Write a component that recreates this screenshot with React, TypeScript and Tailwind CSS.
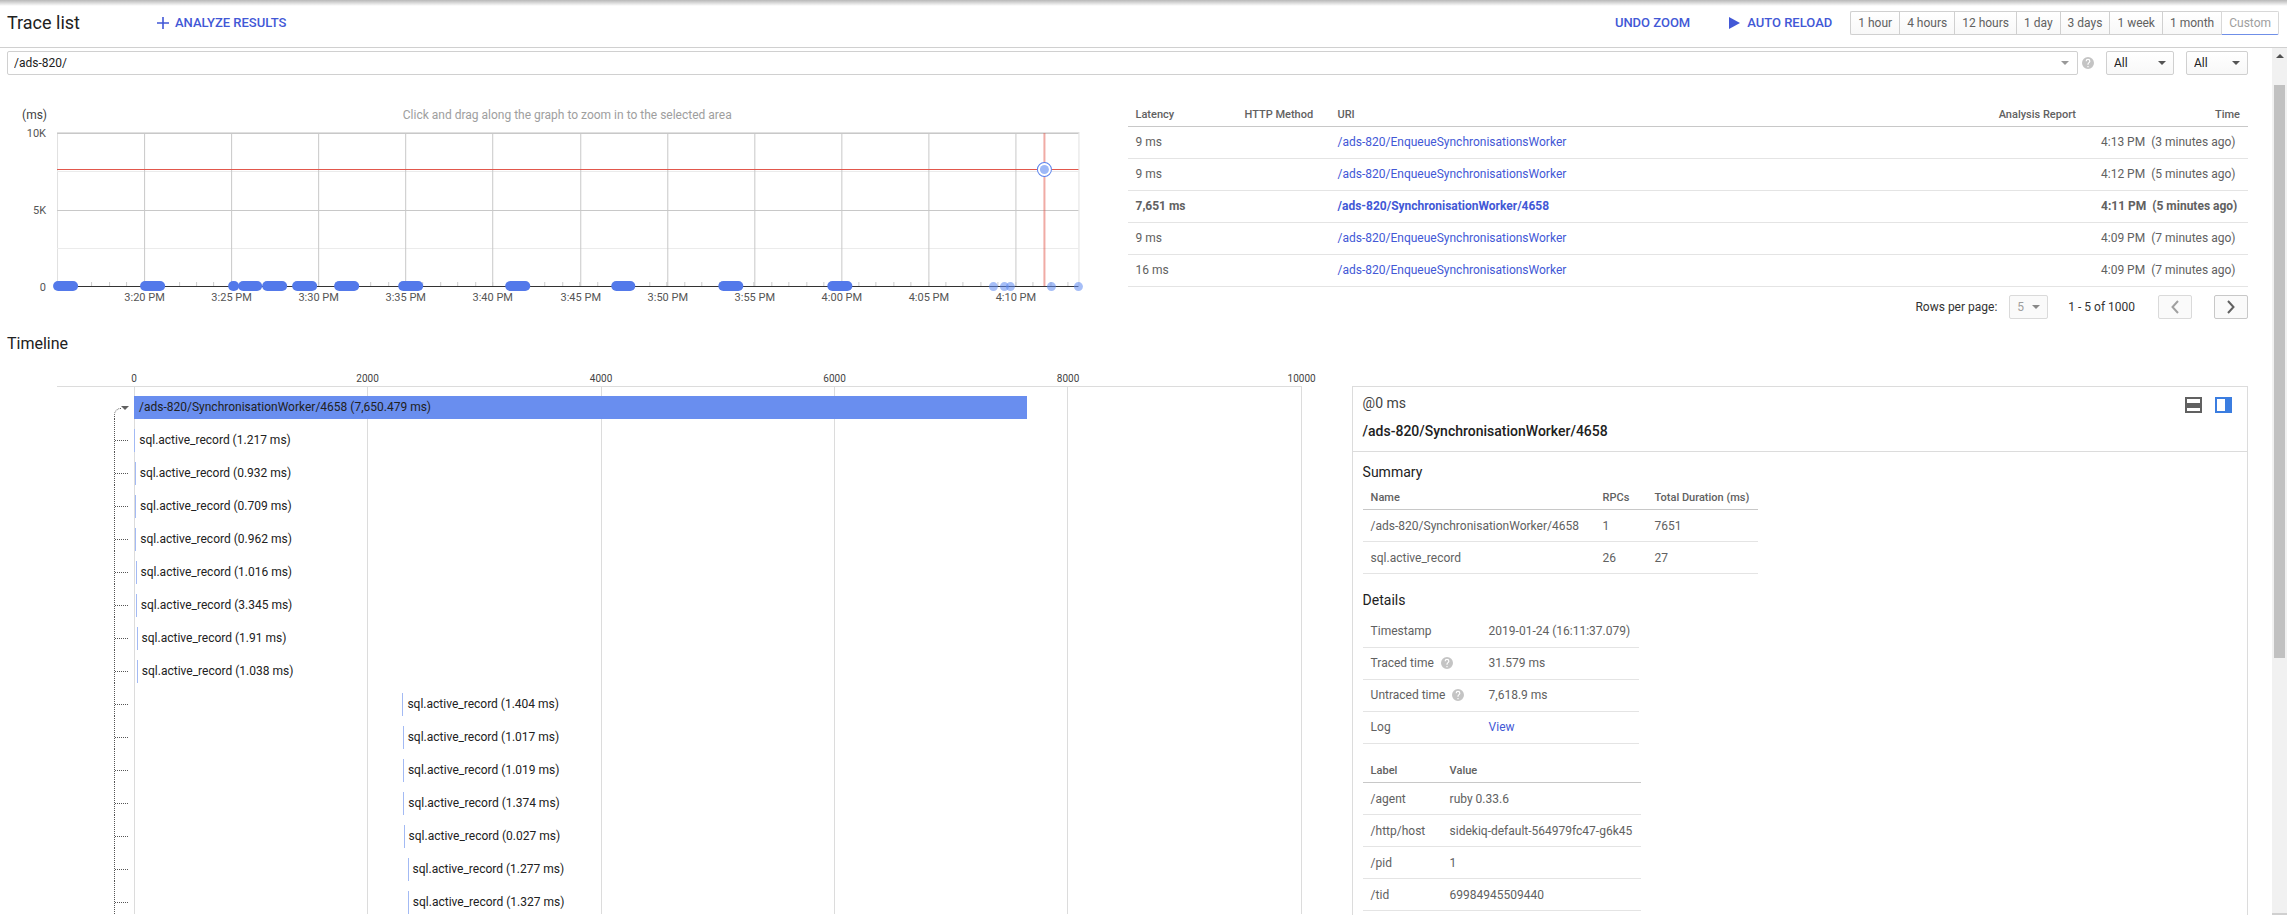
import type { ReactNode } from 'react';

const ranges = ['1 hour', '4 hours', '12 hours', '1 day', '3 days', '1 week', '1 month'];

const traces = [
  { latency: '9 ms', uri: '/ads-820/EnqueueSynchronisationsWorker', time: '4:13 PM', ago: '(3 minutes ago)' },
  { latency: '9 ms', uri: '/ads-820/EnqueueSynchronisationsWorker', time: '4:12 PM', ago: '(5 minutes ago)' },
  { latency: '7,651 ms', uri: '/ads-820/SynchronisationWorker/4658', time: '4:11 PM', ago: '(5 minutes ago)', selected: true },
  { latency: '9 ms', uri: '/ads-820/EnqueueSynchronisationsWorker', time: '4:09 PM', ago: '(7 minutes ago)' },
  { latency: '16 ms', uri: '/ads-820/EnqueueSynchronisationsWorker', time: '4:09 PM', ago: '(7 minutes ago)' },
];

// start is in ms from the beginning of the trace
const spans = [
  { start: 2, duration: '1.217' },
  { start: 6, duration: '0.932' },
  { start: 9, duration: '0.709' },
  { start: 11, duration: '0.962' },
  { start: 13, duration: '1.016' },
  { start: 15, duration: '3.345' },
  { start: 22, duration: '1.91' },
  { start: 24, duration: '1.038' },
  { start: 2299, duration: '1.404' },
  { start: 2301, duration: '1.017' },
  { start: 2303, duration: '1.019' },
  { start: 2306, duration: '1.374' },
  { start: 2309, duration: '0.027' },
  { start: 2343, duration: '1.277' },
  { start: 2345, duration: '1.327' },
];

const TIMELINE_MAX = 10000;

const xTicks = ['3:20 PM', '3:25 PM', '3:30 PM', '3:35 PM', '3:40 PM', '3:45 PM', '3:50 PM', '3:55 PM', '4:00 PM', '4:05 PM', '4:10 PM'];
const bursts = [[46, 71], [133, 158], [221, 232], [231, 255], [255, 280], [285, 310], [327, 352], [391, 416], [498, 523], [604, 628], [711, 736], [820, 845]];
const singles = [986, 997, 1003, 1044, 1071];

const labels = [
  ['/agent', 'ruby 0.33.6'],
  ['/http/host', 'sidekiq-default-564979fc47-g6k45'],
  ['/pid', '1'],
  ['/tid', '69984945509440'],
];

function HelpIcon({ className }: { className: string }) {
  return (
    <svg viewBox="0 0 24 24" className={className} fill="#c4c4c4" aria-hidden="true">
      <path d="M12 0a12 12 0 1 0 0 24 12 12 0 0 0 0-24zm1.2 20.4h-2.4V18h2.4v2.4zm2.5-9.3-1.1 1.1c-.9.9-1.4 1.6-1.4 3.4h-2.4V15c0-1.3.5-2.5 1.4-3.4l1.5-1.5c.4-.4.7-1 .7-1.7a2.4 2.4 0 0 0-4.8 0H7.2a4.8 4.8 0 0 1 9.6 0c0 1.1-.4 2-1.1 2.7z" />
    </svg>
  );
}

function Caret({ className }: { className: string }) {
  return (
    <svg viewBox="0 0 8 4" className={`pointer-events-none absolute h-1 w-2 ${className}`} fill="currentColor" aria-hidden="true">
      <path d="M0 0h8L4 4z" />
    </svg>
  );
}

function Header() {
  return (
    <header className="flex h-12 shrink-0 items-center border-b border-[#d0d0d0] bg-linear-to-b from-[#b8b8b8] via-white via-[6px] to-white pr-2 pb-[2px] pl-[7px]">
      <h1 className="w-[150px] text-[18px] leading-6 text-[#212121]">Trace list</h1>
      <button className="flex items-center gap-[6px] text-[13px] font-medium text-[#4258d6]">
        <svg viewBox="0 0 12 12" className="h-3 w-3" stroke="currentColor" strokeWidth="1.6" aria-hidden="true">
          <path d="M6 0v12M0 6h12" />
        </svg>
        ANALYZE RESULTS
      </button>
      <button className="ml-auto text-[13px] font-medium text-[#4258d6]">UNDO ZOOM</button>
      <button className="ml-[39px] flex items-center gap-[7px] text-[13px] font-medium text-[#4258d6]">
        <svg viewBox="0 0 11 12" className="h-3 w-[11px]" fill="currentColor" aria-hidden="true">
          <path d="M0 0l11 6-11 6z" />
        </svg>
        AUTO RELOAD
      </button>
      <div className="ml-[18px] flex h-6 text-[12px] text-[#616161]">
        {ranges.map((range) => (
          <button key={range} className="border border-r-0 border-[#d0d0d0] bg-linear-to-b from-white to-[#f8f8f8] px-[7px] first:rounded-l-xs">
            {range}
          </button>
        ))}
        <button disabled className="rounded-r-xs border border-[#d8d8d8] border-b-[#6f8fe8] px-[7px] text-[#a0a0a0]">
          Custom
        </button>
      </div>
    </header>
  );
}

function Filters() {
  return (
    <div className="flex items-center">
      <div className="relative flex-1">
        <input
          aria-label="Trace filter"
          defaultValue="/ads-820/"
          className="block h-6 w-full rounded-xs border border-[#d0d0d0] px-[6px] text-[12px] text-[#212121] outline-none"
        />
        <Caret className="top-[10px] right-[9px] text-[#999]" />
      </div>
      <HelpIcon className="ml-1 h-3 w-3" />
      <div className="relative ml-3 w-[68px]">
        <select aria-label="HTTP method" className="block h-6 w-full appearance-none rounded-xs border border-[#d0d0d0] bg-linear-to-b from-white to-[#f8f8f8] px-[7px] text-[12px] text-[#212121]">
          <option>All</option>
        </select>
        <Caret className="top-[10px] right-2 text-[#555]" />
      </div>
      <div className="relative ml-3 w-[62px]">
        <select aria-label="Status" className="block h-6 w-full appearance-none rounded-xs border border-[#d0d0d0] bg-linear-to-b from-white to-[#f8f8f8] px-[7px] text-[12px] text-[#212121]">
          <option>All</option>
        </select>
        <Caret className="top-[10px] right-2 text-[#555]" />
      </div>
    </div>
  );
}

function LatencyChart() {
  const minor = Array.from({ length: 58 }, (_, i) => 67 + i * 17.42).filter((x) => x < 1069);

  return (
    <svg viewBox="0 0 1120 208" className="block w-full" role="img" aria-label="Latency over time">
      <text x="15" y="21" fontSize="12" fill="#424242">(ms)</text>
      <text x="560" y="21" fontSize="12" fill="#9e9e9e" textAnchor="middle">Click and drag along the graph to zoom in to the selected area</text>
      <path d="M50.5 34v154M1071.5 34v154M50 34.5h1022" stroke="#e0e0e0" strokeWidth="1" fill="none" />
      <path d="M50 73.5h1021M50 150.5h1021" stroke="#ebebeb" />
      <path d="M50 35.5h1021M50 112.5h1021" stroke="#c8c8c8" />
      {minor.map((x) => (
        <path key={x} d={`M${Math.round(x) + 0.5} 184v4`} stroke="#ccc" />
      ))}
      {xTicks.map((label, i) => {
        const x = Math.round(137 + i * 87.1) + 0.5;
        return (
          <g key={label}>
            <path d={`M${x} 35v153`} stroke="#c8c8c8" />
            <text x={x} y="203" fontSize="11" fill="#555" textAnchor="middle">{label}</text>
          </g>
        );
      })}
      {['10K', '5K', '0'].map((label, i) => (
        <text key={label} x="39" y={39 + i * 77} fontSize="11" fill="#555" textAnchor="end">{label}</text>
      ))}
      <path d="M50 188.5h1021" stroke="#333" />
      <path d="M50 71.5h1021" stroke="#e2574c" />
      <path d="M1037 35v153" stroke="#e2574c" strokeOpacity="0.5" strokeWidth="2" />
      {bursts.map(([from, to]) => (
        <rect key={from} x={from} y="183" width={to - from} height="10" rx="5" fill="#5379ea" />
      ))}
      {singles.map((x) => (
        <circle key={x} cx={x} cy="188.5" r="4.5" fill="#5c88f0" fillOpacity="0.55" />
      ))}
      <circle cx="1037" cy="71.5" r="7" fill="#fff" stroke="#5c82ec" />
      <circle cx="1037" cy="71.5" r="4.5" fill="#9db8f7" />
    </svg>
  );
}

function TraceTable() {
  return (
    <div>
      <table className="w-full table-fixed text-left text-[12px] text-[#616161]">
        <thead>
          <tr className="h-[26px] border-b border-[#c8c8c8] text-[11px]">
            <th className="w-[109px] pt-1 pl-2 font-medium">Latency</th>
            <th className="w-[93px] pt-1 pl-2 font-medium">HTTP Method</th>
            <th className="pt-1 pl-2 font-medium">URI</th>
            <th className="w-[93px] pt-1 text-right font-medium">Analysis Report</th>
            <th className="w-[172px] pt-1 pr-2 text-right font-medium">Time</th>
          </tr>
        </thead>
        <tbody>
          {traces.map((trace, i) => (
            <tr key={i} className={`h-8 border-b border-[#e4e4e4] ${trace.selected ? 'font-bold' : ''}`}>
              <td className="pl-2">{trace.latency}</td>
              <td></td>
              <td className="pl-2">
                <a href="#trace" className="text-[#4258d6]">{trace.uri}</a>
              </td>
              <td></td>
              <td>
                <div className="ml-auto flex w-[147px] gap-[6px] whitespace-nowrap">
                  <span>{trace.time}</span>
                  <span>{trace.ago}</span>
                </div>
              </td>
            </tr>
          ))}
        </tbody>
      </table>
      <div className="mt-2 flex items-center justify-end text-[12px] text-[#333]">
        <label htmlFor="rows">Rows per page:</label>
        <div className="relative ml-3 w-[39px]">
          <select id="rows" disabled className="block h-6 w-full appearance-none rounded-xs border border-[#dadada] bg-[#fafafa] px-[7px] text-[#9e9e9e]">
            <option>5</option>
          </select>
          <Caret className="top-[10px] right-2 text-[#888]" />
        </div>
        <span className="ml-5">1 - 5 of 1000</span>
        <button disabled aria-label="Previous page" className="ml-[23px] flex h-6 w-[34px] items-center justify-center rounded-xs border border-[#dadada] bg-[#fafafa] text-[#a0a0a0]">
          <svg viewBox="0 0 8 14" className="h-[14px] w-2" fill="none" stroke="currentColor" strokeWidth="2"><path d="M7 1L1.500 7 7 13" /></svg>
        </button>
        <button aria-label="Next page" className="ml-[22px] flex h-6 w-[34px] items-center justify-center rounded-xs border border-[#c8c8c8] bg-[#fafafa] text-[#616161]">
          <svg viewBox="0 0 8 14" className="h-[14px] w-2" fill="none" stroke="currentColor" strokeWidth="2"><path d="M1 1l5.500 6L1 13" /></svg>
        </button>
      </div>
    </div>
  );
}

function Timeline() {
  return (
    <div className="w-3/5 pr-[50px] pl-[50px]">
      <div className="ml-[77px] flex h-[14px] text-[10px] leading-[14px] text-[#444]">
        {[0, 2000, 4000, 6000, 8000].map((tick) => (
          <div key={tick} className="w-1/5">
            <span className="inline-block -translate-x-1/2">{tick}</span>
          </div>
        ))}
        <span className="w-0"><span className="inline-block -translate-x-1/2">10000</span></span>
      </div>
      <div className="relative border-t border-[#dcdcdc]">
        <div className="absolute inset-y-0 right-0 left-[77px] grid grid-cols-5 border-l border-[#dcdcdc]">
          {[1, 2, 3, 4, 5].map((col) => (
            <div key={col} className="border-r border-[#dcdcdc]"></div>
          ))}
        </div>
        <div className="relative flex pt-[9px] text-[12px] text-[#212121]">
          <div className="flex w-[77px] shrink-0 justify-end">
            <div className="relative w-[20px]">
              <div className="absolute top-3 bottom-0 left-0 w-[7px] rounded-tl-lg border-t border-l border-dotted border-[#555]"></div>
              <button aria-label="Collapse" className="absolute top-[10px] left-[7px] block h-2 w-2 text-[#616161]">
                <Caret className="top-0 left-0" />
              </button>
            </div>
          </div>
          <div className="flex-1">
            <div className="h-[23px] w-[76.5%] bg-[#698eef] pl-[5px] leading-[23px] whitespace-nowrap">/ads-820/SynchronisationWorker/4658 (7,650.479 ms)</div>
          </div>
        </div>
        {spans.map((span) => (
          <div key={span.start} className="relative flex pt-[10px] text-[12px] text-[#212121]">
            <div className="flex w-[77px] shrink-0 justify-end">
              <div className="-mt-[10px] w-[20px] border-l border-dotted border-[#555]">
                <div className="mt-[21px] w-[13px] border-t border-dotted border-[#555]"></div>
              </div>
            </div>
            <div className="flex-1">
              <div
                className="h-[23px] border-l border-[#a3baf4] pl-1 leading-[23px] whitespace-nowrap"
                style={{ marginLeft: `${(span.start / TIMELINE_MAX) * 100}%` }}
              >
                sql.active_record ({span.duration} ms)
              </div>
            </div>
          </div>
        ))}
      </div>
    </div>
  );
}

function DetailRow({ label, help, children }: { label: string; help?: boolean; children: ReactNode }) {
  return (
    <tr className="h-8 border-b border-[#e4e4e4]">
      <td className="w-[118px] pl-2">
        <span className="flex items-center gap-[7px]">
          {label}
          {help && <HelpIcon className="h-3 w-3" />}
        </span>
      </td>
      <td className="pl-2">{children}</td>
    </tr>
  );
}

function DetailsPanel() {
  return (
    <section className="mt-[14px] w-2/5 border border-[#dcdcdc]">
      <div className="flex h-[65px] justify-between border-b border-[#dcdcdc] pr-[15px] pl-[10px]">
        <div className="pt-[2px] text-[14px] leading-7 text-[#212121]">
          <p className="text-[#424242]">@0 ms</p>
          <h3 className="font-medium">/ads-820/SynchronisationWorker/4658</h3>
        </div>
        <div className="flex gap-[13px] pt-[10px]">
          <button aria-label="Dock to bottom" className="h-4 w-[17px]">
            <svg viewBox="0 0 17 16" className="h-4 w-[17px]"><path d="M0 0h17v16H0z" fill="#616161" /><path d="M2 2h13v4H2zM2 11h13v3H2z" fill="#fff" /></svg>
          </button>
          <button aria-label="Dock to side" className="h-4 w-[17px]">
            <svg viewBox="0 0 17 16" className="h-4 w-[17px]"><path d="M0 0h17v16H0z" fill="#3b7de0" /><path d="M2 2h8v12H2z" fill="#fff" /></svg>
          </button>
        </div>
      </div>
      <div className="px-[10px] pt-[10px] text-[12px] text-[#616161]">
        <h4 className="text-[14px] leading-5 text-[#212121]">Summary</h4>
        <table className="mt-[2px] w-[395px] table-fixed text-left">
          <thead>
            <tr className="h-[26px] border-b border-[#c8c8c8] text-[11px]">
              <th className="w-[232px] pt-1 pl-2 font-medium">Name</th>
              <th className="w-[52px] pt-1 pl-2 font-medium">RPCs</th>
              <th className="pt-1 pl-2 font-medium">Total Duration (ms)</th>
            </tr>
          </thead>
          <tbody>
            <tr className="h-8 border-b border-[#e4e4e4]">
              <td className="pl-2">/ads-820/SynchronisationWorker/4658</td>
              <td className="pl-2">1</td>
              <td className="pl-2">7651</td>
            </tr>
            <tr className="h-8 border-b border-[#e4e4e4]">
              <td className="pl-2">sql.active_record</td>
              <td className="pl-2">26</td>
              <td className="pl-2">27</td>
            </tr>
          </tbody>
        </table>
        <h4 className="mt-4 text-[14px] leading-5 text-[#212121]">Details</h4>
        <table className="mt-[5px] w-[276px] table-fixed text-left">
          <tbody>
            <DetailRow label="Timestamp">2019-01-24 (16:11:37.079)</DetailRow>
            <DetailRow label="Traced time" help>31.579 ms</DetailRow>
            <DetailRow label="Untraced time" help>7,618.9 ms</DetailRow>
            <DetailRow label="Log">
              <a href="#log" className="text-[#4258d6]">View</a>
            </DetailRow>
          </tbody>
        </table>
        <table className="mt-[13px] w-[278px] table-fixed text-left">
          <thead>
            <tr className="h-[26px] border-b border-[#c8c8c8] text-[11px]">
              <th className="w-[79px] pt-1 pl-2 font-medium">Label</th>
              <th className="pt-1 pl-2 font-medium">Value</th>
            </tr>
          </thead>
          <tbody>
            {labels.map(([label, value]) => (
              <tr key={label} className="h-8 border-b border-[#e4e4e4]">
                <td className="pl-2">{label}</td>
                <td className="pl-2">{value}</td>
              </tr>
            ))}
          </tbody>
        </table>
        <div className="h-10"></div>
      </div>
    </section>
  );
}

export default function App() {
  return (
    <div className="flex h-screen flex-col overflow-hidden bg-white font-[Roboto,sans-serif]">
      <Header />
      <div className="flex min-h-0 flex-1">
        <main className="min-w-0 flex-1 overflow-hidden pt-[3px] pr-6 pl-[7px]">
          <Filters />
          <div className="mt-[23px] grid grid-cols-2">
            <LatencyChart />
            <div className="pt-[2px]">
              <TraceTable />
            </div>
          </div>
          <h2 className="mt-[13px] text-[16px] leading-6 text-[#212121]">Timeline</h2>
          <div className="mt-4 flex items-start">
            <Timeline />
            <DetailsPanel />
          </div>
        </main>
        <div className="flex w-[15px] shrink-0 flex-col items-center border-b-2 border-[#d0d0d0] bg-[#f1f1f1] pt-[6px]" aria-hidden="true">
          <svg viewBox="0 0 8 4" className="h-1 w-2" fill="#505050"><path d="M0 4l4-4 4 4z" /></svg>
          <div className="mt-[27px] h-2/3 w-[11px] bg-[#c1c1c1]"></div>
        </div>
      </div>
    </div>
  );
}
